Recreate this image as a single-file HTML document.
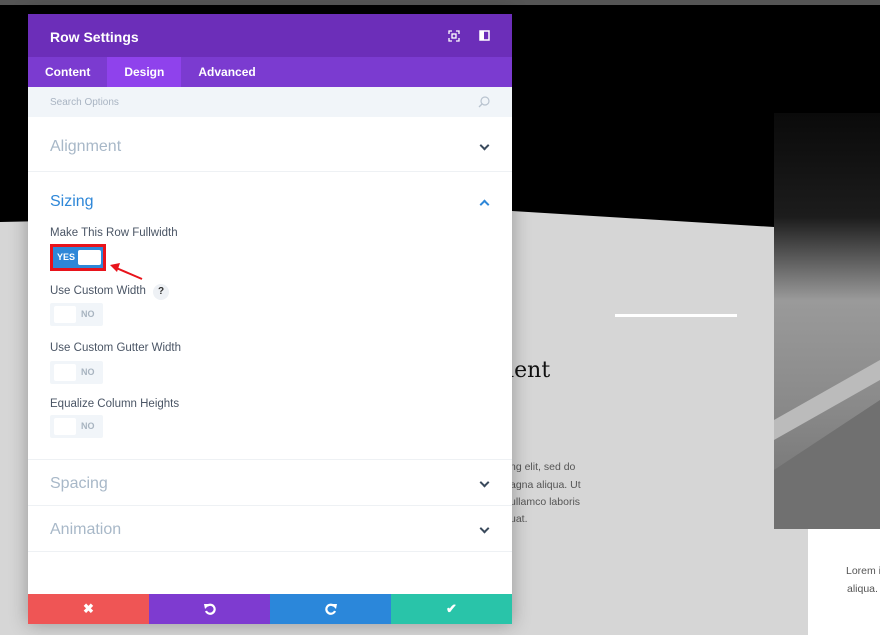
<!DOCTYPE html>
<html><head><meta charset="utf-8"><style>
*{margin:0;padding:0;box-sizing:border-box}
body{width:880px;height:635px;overflow:hidden;position:relative;background:#000;font-family:"Liberation Sans",sans-serif}
.abs{position:absolute}
#panel{left:28px;top:14px;width:484px;height:610px;background:#fff;box-shadow:0 0 18px rgba(0,0,0,.3)}
.hdr{height:43px;background:#6c2eb9;color:#fff;font-weight:bold;font-size:14px;padding:15px 0 0 22px}
.tabs{height:30px;background:#7b3bd0;display:flex;font-weight:bold;font-size:12px;color:#fff}
.tabs div{padding:8px 17px 0}
.tabs .act{background:#8f42ec}
.search{height:30px;background:#f1f5f9;color:#a9b4c2;font-size:10px;padding:10px 0 0 22px;position:relative}
.sec{border-bottom:1px solid #eef1f4;position:relative}
.sec .t{font-size:16px;color:#a8b8c8;padding-left:22px}
.chev{position:absolute;right:24px;width:7px;height:7px;border-right:2px solid #3a4a5c;border-bottom:2px solid #3a4a5c;transform:rotate(45deg)}
.lbl{position:absolute;left:22px;font-size:11.5px;color:#4a5565}
.off{position:absolute;left:22px;width:53px;height:23px;background:#f1f5f9;border-radius:2px}
.off .k{position:absolute;left:4px;top:3px;width:22px;height:17px;background:#fff;border-radius:2px}
.off span{position:absolute;left:31px;top:6px;font-size:9px;font-weight:bold;color:#a8b4c0}
.foot{position:absolute;left:0;top:580px;width:484px;height:30px;display:flex}
.foot div{flex:1;display:flex;align-items:center;justify-content:center;color:#fff;font-weight:bold;font-size:13px}
</style></head><body>
<div class="abs" style="left:0;top:0;width:880px;height:5px;background:#555"></div>
<svg class="abs" style="left:0;top:0" width="880" height="635">
<polygon points="0,222 512,211 774,227 774,635 0,635" fill="#d6d6d6"/>
<defs><linearGradient id="g" x1="0" y1="0" x2="0" y2="1"><stop offset="0" stop-color="#0a0a0a"/><stop offset=".25" stop-color="#1c1c1c"/><stop offset=".45" stop-color="#9a9a9a"/><stop offset=".7" stop-color="#8a8a8a"/><stop offset="1" stop-color="#6e6e6e"/></linearGradient></defs>
<rect x="774" y="113" width="106" height="416" fill="url(#g)"/>
<polygon points="774,420 880,360 880,380 774,440" fill="#bbb"/>
<polygon points="774,470 880,400 880,529 774,529" fill="#707070"/>
<rect x="774" y="529" width="106" height="106" fill="#d6d6d6"/>
<rect x="808" y="529" width="72" height="106" fill="#fff"/>
<rect x="615" y="314" width="122" height="3" fill="#fff"/>
<text x="494" y="377" font-family="DejaVu Serif,serif" font-size="22" fill="#111">alent</text>
<g font-family="Liberation Sans,sans-serif" font-size="10.5" fill="#555">
<text x="510" y="470">ng elit, sed do</text><text x="510" y="488">agna aliqua. Ut</text>
<text x="510" y="505">ullamco laboris</text><text x="510" y="522">uat.</text>
<text x="846" y="574">Lorem i</text><text x="847" y="592">aliqua.</text></g>
</svg>
<div id="panel" class="abs">
<div class="hdr">Row Settings
<svg class="abs" style="left:420px;top:16px" width="12" height="12"><path d="M1 4V1h3M8 1h3v3M11 8v3H8M4 11H1V8" stroke="#fff" fill="none" stroke-width="1.3"/><rect x="4" y="4" width="4" height="4" fill="none" stroke="#fff" stroke-width="1.3"/></svg>
<svg class="abs" style="left:451px;top:16px" width="11" height="11"><rect x="1" y="1" width="9" height="9" fill="none" stroke="#fff" stroke-width="1.5"/><rect x="1" y="1" width="4" height="9" fill="#fff"/></svg>
</div>
<div class="tabs"><div>Content</div><div class="act">Design</div><div>Advanced</div></div>
<div class="search">Search Options
<svg class="abs" style="left:450px;top:9px" width="12" height="12"><circle cx="7" cy="5" r="4" fill="none" stroke="#b9c3cf" stroke-width="1.2"/><path d="M4 8L1 11" stroke="#b9c3cf" stroke-width="1.3"/></svg></div>
<div class="sec" style="height:55px"><div class="t" style="padding-top:21px">Alignment</div><div class="chev" style="top:25px"></div></div>
<div style="position:relative;height:288px;border-bottom:1px solid #eef1f4">
<div style="position:absolute;left:22px;top:21px;font-size:16px;color:#2e87d8">Sizing</div>
<div class="chev" style="top:29px;transform:rotate(225deg);border-color:#2e87d8"></div>
<div class="lbl" style="top:55px">Make This Row Fullwidth</div>
<div style="position:absolute;left:22px;top:72px;width:56px;height:27px;border:3px solid #e8131b;background:#2e87d8">
<span style="position:absolute;left:4px;top:5px;color:#fff;font-size:9px;font-weight:bold">YES</span>
<div style="position:absolute;left:25px;top:3px;width:23px;height:15px;background:#fff;border-radius:2px"></div></div>
<svg class="abs" style="left:80px;top:88px" width="40" height="22"><path d="M34 19L6 7" stroke="#e8131b" stroke-width="2"/><path d="M2 5L12 3L9 12Z" fill="#e8131b"/></svg>
<div class="lbl" style="top:112px">Use Custom Width <span style="display:inline-block;width:16px;height:16px;border-radius:8px;background:#eef1f5;text-align:center;font-weight:bold;font-size:10px;line-height:16px;color:#333;margin-left:4px">?</span></div>
<div class="off" style="top:131px"><div class="k"></div><span>NO</span></div>
<div class="lbl" style="top:170px">Use Custom Gutter Width</div>
<div class="off" style="top:189px"><div class="k"></div><span>NO</span></div>
<div class="lbl" style="top:226px">Equalize Column Heights</div>
<div class="off" style="top:243px"><div class="k"></div><span>NO</span></div>
</div>
<div class="sec" style="height:46px"><div class="t" style="padding-top:15px">Spacing</div><div class="chev" style="top:19px"></div></div>
<div class="sec" style="height:46px"><div class="t" style="padding-top:15px">Animation</div><div class="chev" style="top:19px"></div></div>
<div class="foot">
<div style="background:#ef5555">✖</div>
<div style="background:#7e3bd0"><svg width="12" height="12"><path d="M3 3A4.5 4.5 0 1 1 2 8" stroke="#fff" stroke-width="2.2" fill="none"/><path d="M0 1L6 1L1 6Z" fill="#fff"/></svg></div>
<div style="background:#2b87da"><svg width="12" height="12"><path d="M9 3A4.5 4.5 0 1 0 10 8" stroke="#fff" stroke-width="2.2" fill="none"/><path d="M12 1L6 1L11 6Z" fill="#fff"/></svg></div>
<div style="background:#29c4a9">✔</div>
</div>
</div>
</body></html>
